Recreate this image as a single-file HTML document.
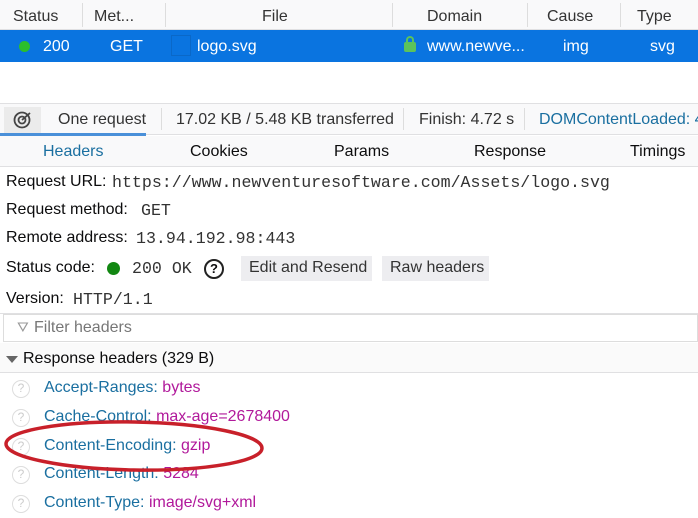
<!DOCTYPE html>
<html><head><meta charset="utf-8"><style>
*{margin:0;padding:0;box-sizing:border-box}
body{width:698px;height:518px;overflow:hidden;background:#fff;font-family:"Liberation Sans",sans-serif;font-size:16px;color:#0c0c0d;position:relative}
.a{position:absolute;white-space:nowrap}
.m{font-family:"Liberation Mono",monospace;font-size:16.6px;color:#333}
.hl{color:#1a6fa0}.hv{color:#b1199b}
.q{position:absolute;left:12px;width:18px;height:18px;border:1.5px solid #ddd;border-radius:50%;color:#ccc;font-size:12px;text-align:center;line-height:15px}
</style></head><body>
<div class="a" style="left:0;top:0;width:698px;height:30px;background:#f9f9fa;border-bottom:1px solid #e0e0e2"></div>
<div class="a" style="left:82px;top:3px;width:1px;height:24px;background:#ddd"></div>
<div class="a" style="left:165px;top:3px;width:1px;height:24px;background:#ddd"></div>
<div class="a" style="left:392px;top:3px;width:1px;height:24px;background:#ddd"></div>
<div class="a" style="left:527px;top:3px;width:1px;height:24px;background:#ddd"></div>
<div class="a" style="left:620px;top:3px;width:1px;height:24px;background:#ddd"></div>
<div class="a" style="left:13px;top:8px;color:#333">Status</div>
<div class="a" style="left:94px;top:8px;color:#333">Met...</div>
<div class="a" style="left:262px;top:8px;color:#333">File</div>
<div class="a" style="left:427px;top:8px;color:#333">Domain</div>
<div class="a" style="left:547px;top:8px;color:#333">Cause</div>
<div class="a" style="left:637px;top:8px;color:#333">Type</div>
<div class="a" style="left:0;top:30px;width:698px;height:32px;background:#0a74e0"></div>
<div class="a" style="left:19px;top:41px;width:11px;height:11px;border-radius:50%;background:#2bbf2b"></div>
<div class="a" style="left:43px;top:38px;color:#fff;font-size:16px">200</div>
<div class="a" style="left:110px;top:38px;color:#fff;font-size:16px">GET</div>
<div class="a" style="left:171px;top:35px;width:20px;height:21px;border:1px solid #0a68c8"></div>
<div class="a" style="left:197px;top:38px;color:#fff;font-size:16px">logo.svg</div>
<div class="a" style="left:404px;top:42px;width:12px;height:10px;background:#5bc25b;border-radius:2px"></div>
<div class="a" style="left:406px;top:36px;width:8px;height:9px;border:2px solid #5bc25b;border-bottom:none;border-radius:4px 4px 0 0"></div>
<div class="a" style="left:427px;top:38px;color:#fff;font-size:16px">www.newve...</div>
<div class="a" style="left:563px;top:38px;color:#fff;font-size:16px">img</div>
<div class="a" style="left:650px;top:38px;color:#fff;font-size:16px">svg</div>
<div class="a" style="left:0;top:103px;width:698px;height:32px;background:#f9f9fa;border-top:1px solid #e0e0e2;border-bottom:1px solid #e0e0e2"></div>
<div class="a" style="left:4px;top:107px;width:37px;height:26px;background:#ebebeb"></div>
<svg class="a" style="left:12px;top:110px" width="22" height="20" viewBox="0 0 22 20"><circle cx="10" cy="10" r="7.5" fill="none" stroke="#444" stroke-width="1.8"/><circle cx="10" cy="10" r="3.5" fill="none" stroke="#444" stroke-width="1.8"/><path d="M10 10 L18 3" stroke="#444" stroke-width="1.8"/></svg>
<div class="a" style="left:58px;top:111px;color:#333">One request</div>
<div class="a" style="left:161px;top:108px;width:1px;height:22px;background:#ddd"></div>
<div class="a" style="left:176px;top:111px;color:#333">17.02 KB / 5.48 KB transferred</div>
<div class="a" style="left:403px;top:108px;width:1px;height:22px;background:#ddd"></div>
<div class="a" style="left:419px;top:111px;color:#333">Finish: 4.72 s</div>
<div class="a" style="left:524px;top:108px;width:1px;height:22px;background:#ddd"></div>
<div class="a" style="left:539px;top:111px;color:#1a6fa0">DOMContentLoaded: 4</div>
<div class="a" style="left:0;top:133px;width:146px;height:3px;background:#4a90d9"></div>
<div class="a" style="left:0;top:136px;width:698px;height:31px;background:#f9f9fa;border-bottom:1px solid #e0e0e2"></div>
<div class="a" style="left:43px;top:143px;color:#1a6fa0">Headers</div>
<div class="a" style="left:190px;top:143px">Cookies</div>
<div class="a" style="left:334px;top:143px">Params</div>
<div class="a" style="left:474px;top:143px">Response</div>
<div class="a" style="left:630px;top:143px">Timings</div>
<div class="a" style="left:6px;top:173px">Request URL:</div><div class="a m" style="left:112px;top:173px">https://www.newventuresoftware.com/Assets/logo.svg</div>
<div class="a" style="left:6px;top:201px">Request method:</div><div class="a m" style="left:141px;top:201px">GET</div>
<div class="a" style="left:6px;top:229px">Remote address:</div><div class="a m" style="left:136px;top:229px">13.94.192.98:443</div>
<div class="a" style="left:6px;top:259px">Status code:</div>
<div class="a" style="left:107px;top:262px;width:13px;height:13px;border-radius:50%;background:#128712"></div>
<div class="a m" style="left:132px;top:259px">200 OK</div>
<div class="a" style="left:204px;top:259px;width:20px;height:20px;border:2px solid #222;border-radius:50%;font-size:13px;font-weight:bold;text-align:center;line-height:16px">?</div>
<div class="a" style="left:241px;top:256px;width:131px;height:25px;background:#ededf0"></div>
<div class="a" style="left:249px;top:259px;color:#333">Edit and Resend</div>
<div class="a" style="left:382px;top:256px;width:107px;height:25px;background:#ededf0"></div>
<div class="a" style="left:390px;top:259px;color:#333">Raw headers</div>
<div class="a" style="left:6px;top:290px">Version:</div><div class="a m" style="left:73px;top:290px">HTTP/1.1</div>
<div class="a" style="left:0;top:313px;width:698px;height:1px;background:#e0e0e2"></div>
<div class="a" style="left:3px;top:314px;width:695px;height:28px;border:1px solid #ddd;background:#fff"></div>
<div class="a" style="left:17px;top:319px;color:#999;font-size:14px">⛛</div>
<div class="a" style="left:34px;top:319px;color:#777">Filter headers</div>
<div class="a" style="left:0;top:343px;width:698px;height:30px;background:#fafafa;border-bottom:1px solid #e0e0e2"></div>
<div class="a" style="left:6px;top:356px;width:0;height:0;border-left:6px solid transparent;border-right:6px solid transparent;border-top:7px solid #666"></div>
<div class="a" style="left:23px;top:350px">Response headers (329 B)</div>
<div class="q" style="top:380px">?</div><div class="a" style="left:44px;top:379px"><span class="hl">Accept-Ranges:</span> <span class="hv">bytes</span></div>
<div class="q" style="top:409px">?</div><div class="a" style="left:44px;top:408px"><span class="hl">Cache-Control:</span> <span class="hv">max-age=2678400</span></div>
<div class="q" style="top:438px">?</div><div class="a" style="left:44px;top:437px"><span class="hl">Content-Encoding:</span> <span class="hv">gzip</span></div>
<div class="q" style="top:466px">?</div><div class="a" style="left:44px;top:465px"><span class="hl">Content-Length:</span> <span class="hv">5284</span></div>
<div class="q" style="top:495px">?</div><div class="a" style="left:44px;top:494px"><span class="hl">Content-Type:</span> <span class="hv">image/svg+xml</span></div>
<svg class="a" style="left:0;top:410px" width="280" height="75"><ellipse cx="134" cy="36" rx="128" ry="24" fill="none" stroke="#c8202a" stroke-width="3.5" transform="rotate(1 134 36)"/></svg>
</body></html>
